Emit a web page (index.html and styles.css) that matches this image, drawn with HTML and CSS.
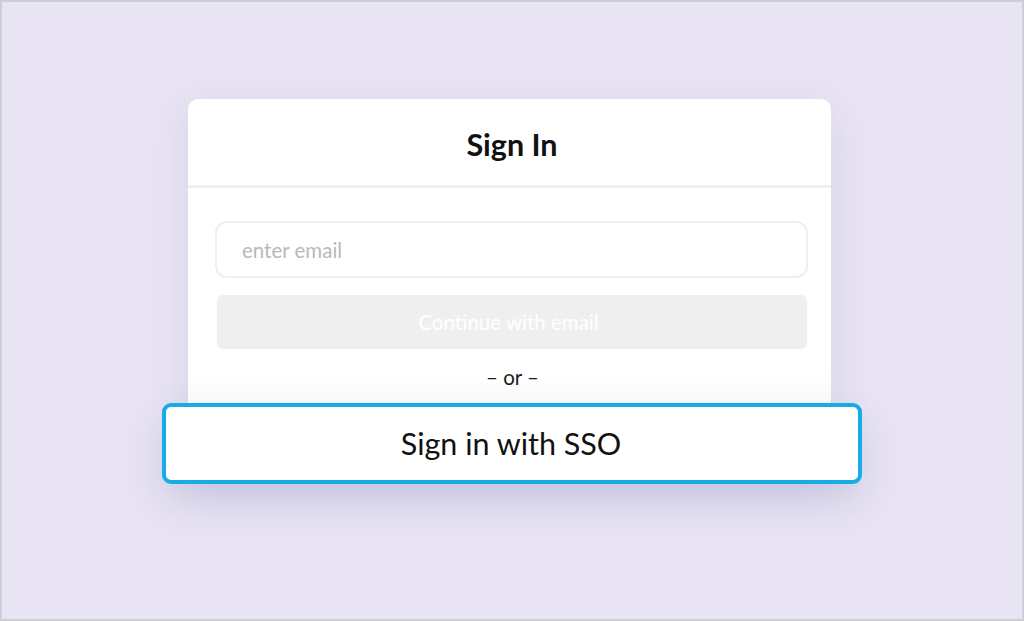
FILE: index.html
```html
<!DOCTYPE html>
<html lang="en">
<head>
<meta charset="utf-8">
<title>Sign In</title>
<link rel="stylesheet" href="styles.css">
</head>
<body>
<div class="frame">
  <div class="stage">
    <div class="card">
      <div class="card-header">
        <h1 class="title">Sign In</h1>
      </div>
      <div class="card-body">
        <div class="input">enter email</div>
        <div class="btn-continue">Continue with email</div>
        <div class="or">– or –</div>
      </div>
    </div>
    <div class="btn-sso">Sign in with SSO</div>
  </div>
</div>
</body>
</html>
```
FILE: styles.css
```css
* { box-sizing: border-box; }
html, body { margin: 0; padding: 0; }
body {
  width: 1024px;
  height: 621px;
  overflow: hidden;
  font-family: "Lato", "Liberation Sans", sans-serif;
}
.frame {
  width: 1024px;
  height: 621px;
  border: 2px solid #cfcdd4;
  background: #e8e4f4;
}
.stage {
  display: flex;
  flex-direction: column;
  align-items: center;
  padding-top: 97px;
}
.card {
  width: 643px;
  background: linear-gradient(to bottom, #ffffff 0%, #ffffff 72%, #f7f7f8 100%);
  border-radius: 10px;
  box-shadow: 0 12px 40px rgba(70, 55, 130, 0.10);
  margin-right: 5px;
  height: 372px;
}
.card-header {
  height: 89px;
  border-bottom: 3px solid #efeff1;
  display: flex;
  align-items: center;
  justify-content: center;
  padding-top: 3px;
  padding-left: 5px;
}
.title {
  margin: 0;
  font-size: 30.5px;
  font-weight: 700;
  color: #111;
}
.card-body {
  padding: 33px 23px 0 27px;
  display: flex;
  flex-direction: column;
}
.input {
  height: 57px;
  border: 2px solid #efefef;
  border-radius: 12px;
  padding-left: 25px;
  display: flex;
  align-items: center;
  font-size: 20.5px;
  color: #b9b9b9;
}
.btn-continue {
  margin: 17px 1px 0 2px;
  height: 54px;
  background: #efefef;
  border-radius: 6px;
  display: flex;
  align-items: center;
  justify-content: center;
  font-size: 20.5px;
  color: #ffffff;
  padding-right: 7px;
}
.or {
  margin-top: 16px;
  text-align: center;
  font-size: 20.5px;
  color: #1a1a1a;
  padding-left: 2px;
}
.btn-sso {
  position: relative;
  z-index: 1;
  margin-top: -68px;
  width: 700px;
  height: 81px;
  border: 4px solid #17ade4;
  border-radius: 9px;
  background: #ffffff;
  box-shadow: 0 18px 40px rgba(70, 55, 130, 0.14);
  display: flex;
  align-items: center;
  justify-content: center;
  font-size: 30.5px;
  color: #111;
  padding-bottom: 2px;
  padding-right: 2px;
}
```
